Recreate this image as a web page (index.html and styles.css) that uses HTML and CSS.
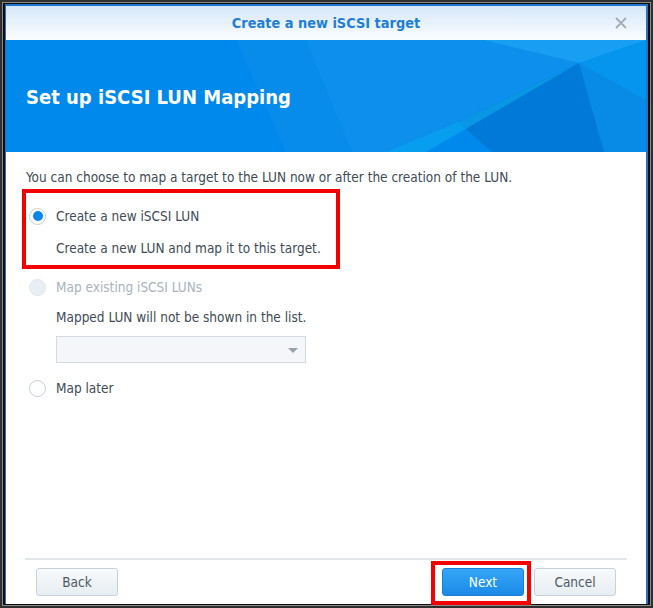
FILE: index.html
```html
<!Doctype html>
<html lang="en">
<head>
  <meta charset="utf-8">
  <title>Create a new iSCSI target</title>
  <link rel="stylesheet" href="styles.css">
</head>
<body>
  <div class='screen'>
    <div class='bevel'>
      <div class='shade'>
        <div class='edge'>
          <div class='window'>

            <div class='titlebar'>
              <span class='titleText'>Create a new iSCSI target</span>
              <svg class='closeIcon' width="14" height="14" viewBox="0 0 14 14">
                <path d="M2 2 L12 12 M12 2 L2 12" stroke="#a3acb5" stroke-width="1.8" fill="none"/>
              </svg>
            </div>

            <div class='banner'>
              <svg class='bannerArt' width="640" height="112" viewBox="0 0 640 112">
                <polygon points="230,0 300,0 346,112 280,112" fill="#ffffff" opacity="0.03"/>
                <polygon points="300,0 477,0 573,23 452,82 380,112 346,112" fill="#ffffff" opacity="0.05"/>
                <polygon points="477,0 640,0 573,23" fill="#3cc0ff" opacity="0.4"/>
                <polygon points="573,23 640,0 640,112 598,112" fill="#0a9cf0" opacity="0.55"/>
                <polygon points="573,23 452,82 486,112 598,112" fill="#0072d0" opacity="0.7"/>
                <polygon points="573,23 452,82 380,112 420,112" fill="#10b4f2" opacity="0.5"/>
                <polygon points="573,23 640,60 640,112 598,112" fill="#0a80dc" opacity="0.45"/>
              </svg>
              <h1 class='bannerTitle'>Set up iSCSI LUN Mapping</h1>
            </div>

            <div class='content'>
              <p class='intro'>You can choose to map a target to the LUN now or after the creation of the LUN.</p>

              <label class='option'>
                <span class='radio checked'></span>
                <span>Create a new iSCSI LUN</span>
              </label>
              <p class='hint'>Create a new LUN and map it to this target.</p>

              <label class='option disabled'>
                <span class='radio'></span>
                <span>Map existing iSCSI LUNs</span>
              </label>
              <p class='hint tight'>Mapped LUN will not be shown in the list.</p>
              <div class='combo'>
                <span class='comboArrow'></span>
              </div>

              <label class='option last'>
                <span class='radio'></span>
                <span>Map later</span>
              </label>

              <div class='markBox markOption'></div>
            </div>

            <div class='footer'>
              <button type='button' class='btn'>Back</button>
              <div class='rightButtons'>
                <button type='button' class='btn primary'>Next</button>
                <button type='button' class='btn'>Cancel</button>
                <div class='markBox markNext'></div>
              </div>
            </div>

          </div>
        </div>
      </div>
    </div>
  </div>
</body>
</html>
```

FILE: styles.css
```css
body {
  margin: 0;
  background: #1b1b1b;
  font-family: "DejaVu Sans Condensed", "DejaVu Sans", sans-serif;
  font-stretch: condensed;
}

.screen {
  width: 653px;
  height: 608px;
  box-sizing: border-box;
  border: 2px solid #2f2f2f;
}

.bevel {
  height: 100%;
  box-sizing: border-box;
  border: 1px solid #8a8a8a;
}

.shade {
  height: 100%;
  box-sizing: border-box;
  border-style: solid;
  border-color: #0c0c0c;
  border-width: 1px 2px 1px 2px;
}

.edge {
  height: 100%;
  box-sizing: border-box;
  border-style: solid;
  border-color: #1f74cc;
  border-width: 2px 2px 0 1px;
}

.window {
  height: 100%;
  background: white;
  display: flex;
  flex-direction: column;
}

.titlebar {
  height: 34px;
  flex-shrink: 0;
  display: flex;
  align-items: center;
  justify-content: center;
  position: relative;
  background: linear-gradient(#d5e7f8, #fbfdff);
}

.titleText {
  color: #1f7ed6;
  font-weight: bold;
  font-size: 14.4px;
}

.closeIcon {
  position: absolute;
  right: 18px;
  top: 10px;
}

.banner {
  height: 112px;
  flex-shrink: 0;
  position: relative;
  background: #0089ec;
  display: flex;
  align-items: center;
  overflow: hidden;
}

.bannerArt {
  position: absolute;
  left: 0;
  top: 0;
}

.bannerTitle {
  position: relative;
  margin: 0 0 0 20px;
  color: white;
  font-size: 20px;
  font-weight: bold;
  padding-top: 2px;
}

.content {
  flex-grow: 1;
  position: relative;
  padding: 17px 20px 0 20px;
  color: #414b55;
  font-size: 13.5px;
}

.intro {
  margin: 0;
  line-height: 16px;
}

.option {
  display: flex;
  align-items: center;
  gap: 10px;
  height: 20px;
  margin-top: 21px;
  padding-left: 3px;
}

.option.last {
  margin-top: 15px;
}

.radio {
  width: 17px;
  height: 17px;
  box-sizing: border-box;
  border: 1px solid #c5ced8;
  border-radius: 50%;
  background: white;
  display: flex;
  align-items: center;
  justify-content: center;
}

.radio.checked::after {
  content: "";
  width: 10px;
  height: 10px;
  border-radius: 50%;
  background: #0a86ea;
}

.option.disabled {
  color: #a9b3bd;
}

.option.disabled .radio {
  background: #e9eef3;
  border-color: #dfe5eb;
}

.hint {
  margin: 14px 0 0 30px;
  line-height: 16px;
}

.hint.tight {
  margin-top: 12px;
}

.combo {
  margin: 11px 0 0 30px;
  width: 250px;
  height: 27px;
  box-sizing: border-box;
  border: 1px solid #d3dae2;
  background: #f4f6f9;
  position: relative;
}

.comboArrow {
  position: absolute;
  right: 7px;
  top: 11px;
  border-left: 5px solid transparent;
  border-right: 5px solid transparent;
  border-top: 5px solid #98a2ac;
}

.footer {
  flex-shrink: 0;
  margin: 0 19px;
  border-top: 2px solid #e1e6eb;
  display: flex;
  justify-content: space-between;
  align-items: flex-start;
  padding: 8px 10px 0 11px;
  box-sizing: border-box;
  height: 46px;
}

.rightButtons {
  display: flex;
  gap: 10px;
  position: relative;
  margin-right: 1px;
}

.btn {
  width: 82px;
  height: 28px;
  border: 1px solid #c7d1db;
  border-radius: 3px;
  background: linear-gradient(#f8fafc, #e7edf2);
  color: #4e5964;
  font-family: "DejaVu Sans Condensed", "DejaVu Sans", sans-serif;
  font-stretch: condensed;
  font-size: 13.5px;
  padding: 0;
}

.btn.primary {
  border-color: #1b7fd6;
  background: linear-gradient(#35a6f8, #1a8ae6);
  color: white;
}

.markBox {
  position: absolute;
  border: 4px solid #f30000;
  box-sizing: border-box;
}

.markOption {
  left: 16px;
  top: 37px;
  width: 318px;
  height: 80px;
}

.markNext {
  left: -11px;
  top: -7px;
  width: 100px;
  height: 44px;
}
```
